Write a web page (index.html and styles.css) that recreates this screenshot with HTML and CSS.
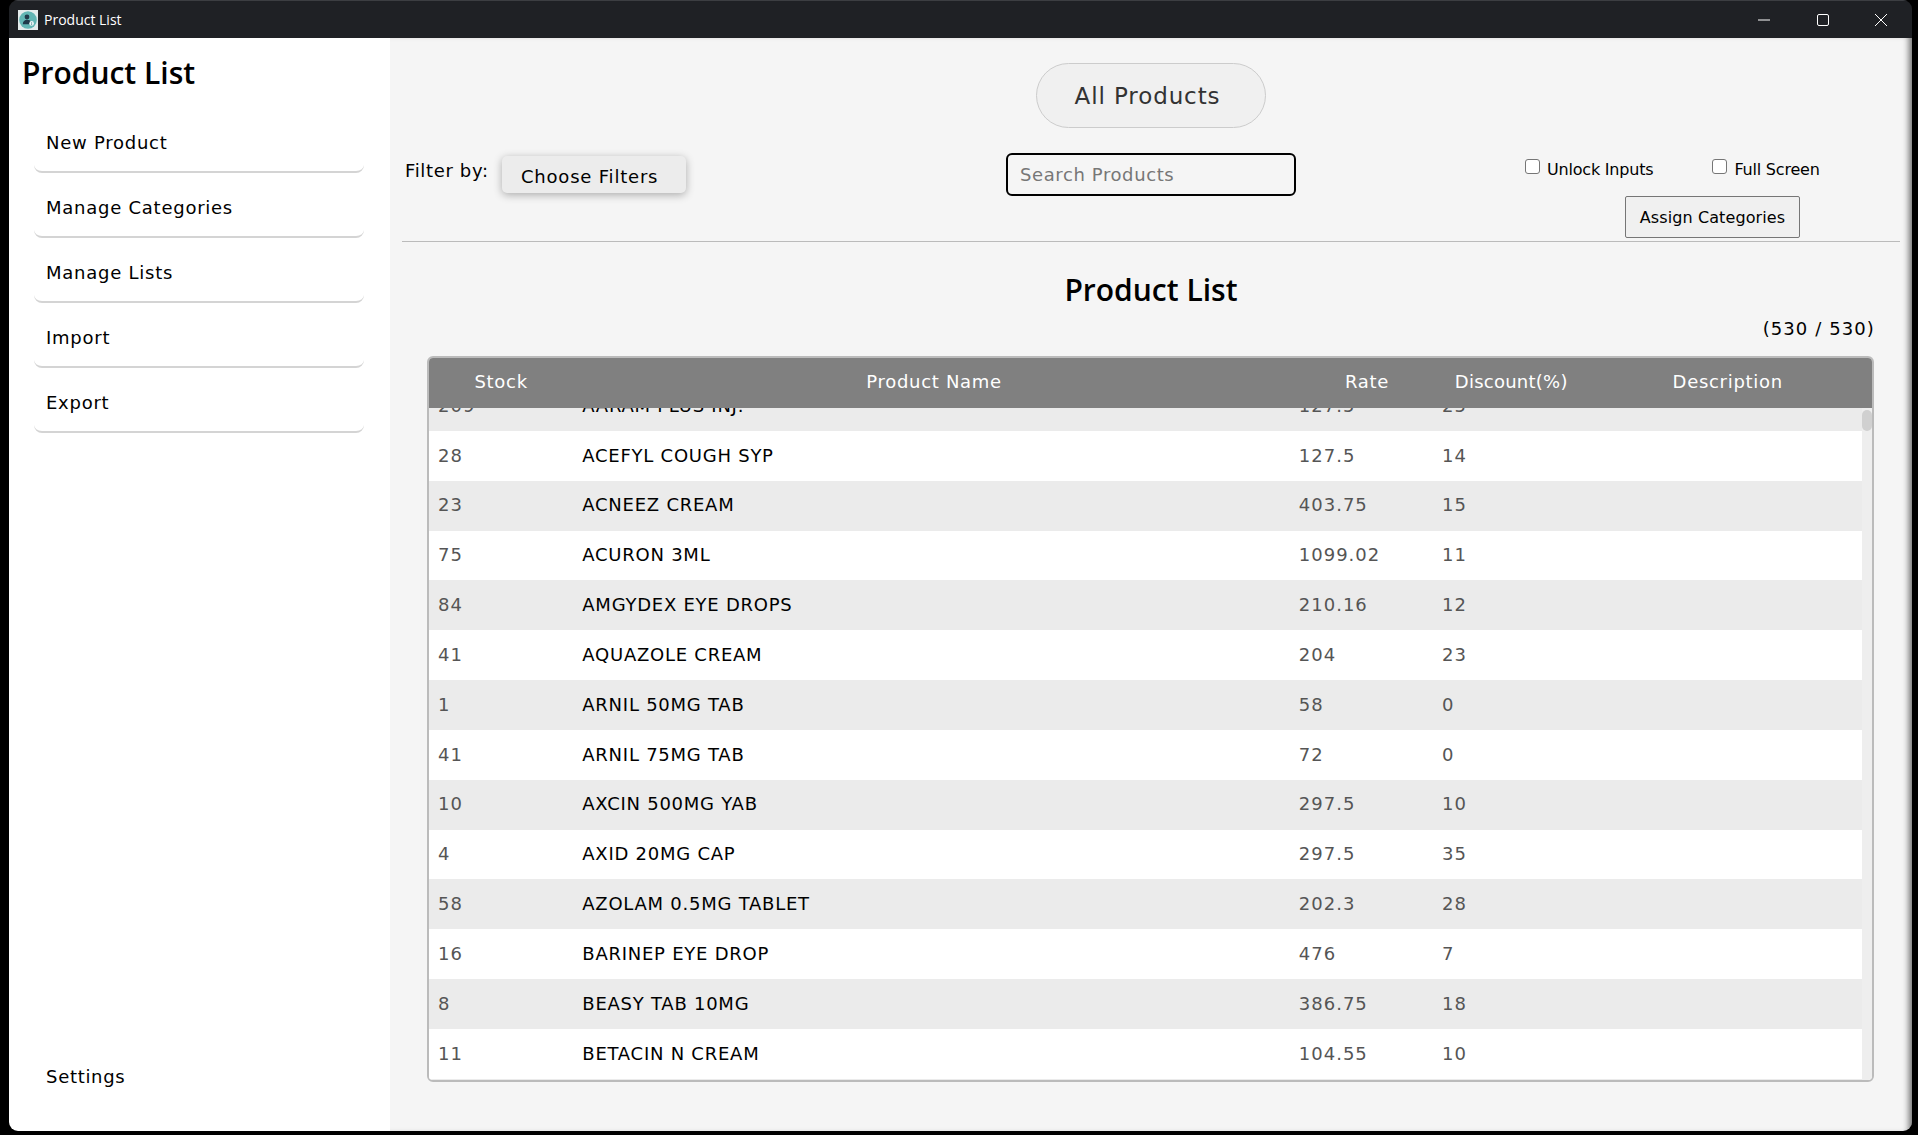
FILE: index.html
```html
<!DOCTYPE html>
<html lang="en">
<head>
<meta charset="utf-8">
<title>Product List</title>
<link rel="stylesheet" href="styles.css">
</head>
<body>
<div class="window">
  <header class="titlebar">
    <svg class="app-icon" viewBox="0 0 20 20" width="20" height="20">
      <rect width="20" height="20" fill="#e4ecec"/>
      <circle cx="10" cy="10" r="8.8" fill="#62b6b4"/>
      <circle cx="9" cy="7" r="2.4" fill="#1f3a4a"/>
      <path d="M4.8 14.2c0-3 1.9-4.5 4.2-4.5s3.2.8 3.6 1.8a3 3 0 0 0-1 2.7z" fill="#1f3a4a"/>
      <circle cx="13.6" cy="13.4" r="2.3" fill="#eef7f7"/>
      <path d="M13.6 12.2v.6M13.6 13.4v1.4" stroke="#2c6f78" stroke-width=".8" fill="none"/>
    </svg>
    <span class="app-name">Product List</span>
    <div class="win-controls">
      <svg viewBox="0 0 12 12" width="12" height="12"><path d="M0 6h12" stroke="#fff" fill="none"/></svg>
      <svg viewBox="0 0 12 12" width="12" height="12"><rect x=".5" y=".5" width="11" height="11" rx="1.5" stroke="#fff" fill="none"/></svg>
      <svg viewBox="0 0 12 12" width="12" height="12"><path d="M0 0l12 12M12 0L0 12" stroke="#fff" fill="none"/></svg>
    </div>
  </header>
  <div class="app">
    <aside class="sidebar">
      <h1 class="side-title">Product List</h1>
      <nav class="menu">
        <a class="menu-item">New Product</a>
        <a class="menu-item">Manage Categories</a>
        <a class="menu-item">Manage Lists</a>
        <a class="menu-item">Import</a>
        <a class="menu-item">Export</a>
      </nav>
      <a class="settings">Settings</a>
    </aside>
    <main class="main">
      <div class="top-center"><button class="pill">All Products</button></div>
      <div class="toolbar">
        <div class="filter">
          <span class="filter-label">Filter by:</span>
          <button class="filter-btn">Choose Filters</button>
        </div>
        <input class="search" type="text" placeholder="Search Products">
        <div class="actions">
          <div class="checks">
            <label class="check"><input type="checkbox"><span>Unlock Inputs</span></label>
            <label class="check"><input type="checkbox"><span>Full Screen</span></label>
          </div>
          <button class="assign">Assign Categories</button>
        </div>
      </div>
      <h2 class="list-title">Product List</h2>
      <div class="count">(530 / 530)</div>
      <section class="table">
        <div class="thead">
          <div>Stock</div><div>Product Name</div><div>Rate</div><div class="th-tight">Discount(%)</div><div>Description</div>
        </div>
        <div class="tbody-wrap">
          <div class="tbody">
            <div class="row first"><span class="num">209</span><span>AARAM PLUS INJ.</span><span class="num">127.5</span><span class="num">25</span><span></span></div>
            <div class="row"><span class="num">28</span><span>ACEFYL COUGH SYP</span><span class="num">127.5</span><span class="num">14</span><span></span></div>
            <div class="row"><span class="num">23</span><span>ACNEEZ CREAM</span><span class="num">403.75</span><span class="num">15</span><span></span></div>
            <div class="row"><span class="num">75</span><span>ACURON 3ML</span><span class="num">1099.02</span><span class="num">11</span><span></span></div>
            <div class="row"><span class="num">84</span><span>AMGYDEX EYE DROPS</span><span class="num">210.16</span><span class="num">12</span><span></span></div>
            <div class="row"><span class="num">41</span><span>AQUAZOLE CREAM</span><span class="num">204</span><span class="num">23</span><span></span></div>
            <div class="row"><span class="num">1</span><span>ARNIL 50MG TAB</span><span class="num">58</span><span class="num">0</span><span></span></div>
            <div class="row"><span class="num">41</span><span>ARNIL 75MG TAB</span><span class="num">72</span><span class="num">0</span><span></span></div>
            <div class="row"><span class="num">10</span><span>AXCIN 500MG YAB</span><span class="num">297.5</span><span class="num">10</span><span></span></div>
            <div class="row"><span class="num">4</span><span>AXID 20MG CAP</span><span class="num">297.5</span><span class="num">35</span><span></span></div>
            <div class="row"><span class="num">58</span><span>AZOLAM 0.5MG TABLET</span><span class="num">202.3</span><span class="num">28</span><span></span></div>
            <div class="row"><span class="num">16</span><span>BARINEP EYE DROP</span><span class="num">476</span><span class="num">7</span><span></span></div>
            <div class="row"><span class="num">8</span><span>BEASY TAB 10MG</span><span class="num">386.75</span><span class="num">18</span><span></span></div>
            <div class="row"><span class="num">11</span><span>BETACIN N CREAM</span><span class="num">104.55</span><span class="num">10</span><span></span></div>
          </div>
          <div class="scrollbar"><div class="thumb"></div></div>
        </div>
      </section>
    </main>
  </div>
</div>
</body>
</html>
```
FILE: styles.css
```css
* { box-sizing: border-box; }
html, body { margin: 0; height: 100%; background: #000; overflow: hidden; }
body { font-family: "DejaVu Sans", sans-serif; color: #000; }
button, input { font-family: inherit; }

.window {
  width: 1903px; height: 1131px; margin-left: 9px;
  border-radius: 9px; overflow: hidden;
  display: flex; flex-direction: column;
}
.titlebar {
  height: 38px; flex: none; background: #1f2125; border-top: 1px solid #3c3e42;
  display: flex; align-items: center; padding-left: 9px; color: #fff;
}
.app-icon { flex: none; }
.app-name { font-family: "Open Sans", sans-serif; font-size: 14px; margin-left: 6px; }
.win-controls { margin-left: auto; display: flex; gap: 46.5px; padding-right: 25px; }

.app { flex: 1; display: flex; min-height: 0; }
.sidebar {
  width: 381px; flex: none; background: #fff;
  display: flex; flex-direction: column; padding: 14px 26px 0 13px;
}
.side-title { font-family: "Open Sans", sans-serif; font-weight: 600; font-size: 30px; line-height: 42px; margin: 0 0 14px; }
.menu { display: flex; flex-direction: column; margin-left: 12px; }
.menu-item {
  height: 65px; padding: 6px 0 0 12px; display: flex; align-items: center;
  font-size: 18px; letter-spacing: .75px;
  border-bottom: 2px solid #d4d4d4; border-radius: 0 0 8px 8px;
}
.settings { margin: auto 0 43px 24px; font-size: 18px; letter-spacing: .7px; line-height: 22px; }

.main {
  flex: 1; min-width: 0; background: #f5f5f5; padding: 25px 12px 0 12px;
  box-shadow: inset -7px 0 6px -4px rgba(0,0,0,.55);
  display: flex; flex-direction: column;
}
.top-center { display: flex; justify-content: center; }
.pill {
  width: 230px; height: 65px; border: 1px solid #ccc; border-radius: 33px; background: #f0f0f0;
  font-size: 23px; letter-spacing: .9px; color: #333; padding: 0 7px 0 0;
}
.toolbar {
  display: grid; grid-template-columns: 1fr 290px 1fr; height: 114px;
  border-bottom: 1px solid #bbb; column-gap: 0; align-items: start;
}
.filter { display: flex; align-items: flex-start; padding-left: 3px; padding-top: 28px; }
.filter-label { font-size: 18px; letter-spacing: .65px; line-height: 24px; margin-top: 3px; }
.filter-btn {
  margin-left: 13px; width: 184px; height: 37px; border: 0; border-radius: 5px; background: #ececec;
  box-shadow: 0 2px 8px rgba(0,0,0,.3); font-size: 18px; letter-spacing: .8px; padding: 4px 8px 0 0; color: #000;
}
.search {
  margin-top: 25px; width: 290px; height: 43px; border: 2px solid #000; border-radius: 6px;
  background: #f5f5f5; padding: 0 12px; font-size: 18px; letter-spacing: .6px; outline: 0;
}
.search::placeholder { color: #777; opacity: 1; }
.actions { display: flex; flex-direction: column; align-items: flex-start; padding-left: 229px; padding-top: 29px; }
.checks { display: flex; gap: 59px; }
.check { display: flex; align-items: center; font-size: 16px; letter-spacing: -.2px; line-height: 20px; white-space: nowrap; }
.check span { position: relative; top: 3px; }
.check input { width: 15px; height: 15px; margin: 0 7px 0 0; position: relative; top: -1px; appearance: none; background: #fff; border: 1.5px solid #767676; border-radius: 3px; }
.assign {
  margin: 19px 0 0 100px; width: 175px; height: 42px; background: #f0f0f0; border: 1px solid #767676; border-radius: 2px;
  font-size: 16px; letter-spacing: .1px; padding: 0; color: #000; white-space: nowrap;
}
.list-title {
  font-family: "Open Sans", sans-serif; font-weight: 600; font-size: 30px; line-height: 42px;
  text-align: center; margin: 27px 0 0;
}
.count { text-align: right; font-size: 18px; letter-spacing: 1.1px; line-height: 24px; margin: 6px 25px 0 0; }
.table {
  margin: 15px 26px 0 25px; height: 726px; border: 2px solid #bbb; border-radius: 6px; overflow: hidden;
  display: flex; flex-direction: column; background: #fff;
}
.thead {
  flex: none; height: 50px; background: #808080; color: #fff;
  display: grid; grid-template-columns: 10% 50% 10% 10% 20%; align-items: center; text-align: center;
  font-size: 18px; letter-spacing: .7px; padding-bottom: 3px;
}
.th-tight { letter-spacing: .25px; }
.tbody-wrap { flex: 1; min-height: 0; display: flex; }
.tbody { flex: 1; min-width: 0; overflow: hidden; background: #ebebeb; }
.row {
  height: 49.85px; display: grid; grid-template-columns: 10% 50% 10% 10% 20%; align-items: center;
  font-size: 18px; letter-spacing: .75px; padding-bottom: 1.5px; background: #fff;
}
.row > span { padding-left: 10px; white-space: nowrap; }
.row:nth-child(odd) { background: #ebebeb; }
.row.first { margin-top: -27px; }
.row .num { color: #555; letter-spacing: 1px; }
.row .num:first-child { padding-left: 9px; }
.scrollbar { width: 10px; flex: none; background: #eee; padding-top: 2px; }
.thumb { height: 21px; background: #d0d0d0; border-radius: 5px; }
```
